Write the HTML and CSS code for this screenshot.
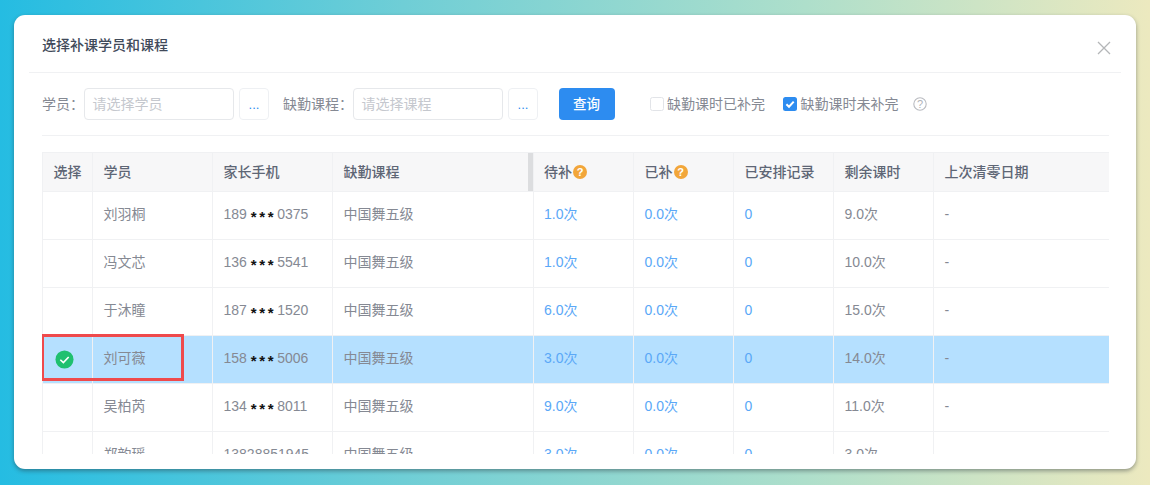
FILE: index.html
```html
<!DOCTYPE html>
<html lang="zh-CN">
<head>
<meta charset="utf-8">
<title>选择补课学员和课程</title>
<link rel="stylesheet" href="styles.css">
</head>
<body>
<main class="card">
  <header class="head">
    <h1 class="title">选择补课学员和课程</h1>
    <svg class="close" viewBox="0 0 14 14" width="14" height="14"><path d="M1 1 13 13M13 1 1 13" stroke="#b4b6b8" stroke-width="1.3" fill="none"/></svg>
  </header>
  <section class="filters">
    <label class="lbl lbl-a">学员：</label>
    <span class="input inp-a">请选择学员</span>
    <span class="dots">...</span>
    <label class="lbl lbl-b">缺勤课程：</label>
    <span class="input inp-b">请选择课程</span>
    <span class="dots">...</span>
    <span class="btn">查询</span>
    <span class="check check-a"><i class="box"></i>缺勤课时已补完</span>
    <span class="check check-b"><i class="box on"><svg viewBox="0 0 14 14" width="14" height="14"><path d="M3.4 7.2 6 9.7 10.7 4.6" stroke="#fff" stroke-width="2" fill="none"/></svg></i>缺勤课时未补完</span>
    <svg class="help" viewBox="0 0 14 14" width="14" height="14"><circle cx="7" cy="7" r="6.2" fill="none" stroke="#b9bbc0" stroke-width="1.1"/><text x="7" y="10.8" text-anchor="middle" class="help-q">?</text></svg>
  </section>
  <div class="tablewrap">
    <table class="grid">
      <colgroup><col class="c1"><col class="c2"><col class="c3"><col class="c4"><col class="c5"><col class="c6"><col class="c7"><col class="c8"><col class="c9"></colgroup>
      <thead>
        <tr>
          <th>选择</th><th>学员</th><th>家长手机</th><th class="grip-cell">缺勤课程<i class="grip"></i></th>
          <th>待补<i class="tip">?</i></th><th>已补<i class="tip">?</i></th><th>已安排记录</th><th>剩余课时</th><th>上次清零日期</th>
        </tr>
      </thead>
      <tbody>
        <tr><td></td><td>刘羽桐</td><td>189<b class="st">***</b>0375</td><td>中国舞五级</td><td class="lnk">1.0次</td><td class="lnk">0.0次</td><td class="lnk">0</td><td>9.0次</td><td>-</td></tr>
        <tr><td></td><td>冯文芯</td><td>136<b class="st">***</b>5541</td><td>中国舞五级</td><td class="lnk">1.0次</td><td class="lnk">0.0次</td><td class="lnk">0</td><td>10.0次</td><td>-</td></tr>
        <tr><td></td><td>于沐瞳</td><td>187<b class="st">***</b>1520</td><td>中国舞五级</td><td class="lnk">6.0次</td><td class="lnk">0.0次</td><td class="lnk">0</td><td>15.0次</td><td>-</td></tr>
        <tr class="sel"><td class="pick"><svg viewBox="0 0 20 20" width="19" height="19"><circle cx="10" cy="10" r="9.5" fill="#1fc06f"/><path d="M5.6 10.3 8.8 13.3 14.4 7.4" stroke="#fff" stroke-width="1.7" fill="none"/></svg></td><td>刘可薇</td><td>158<b class="st">***</b>5006</td><td>中国舞五级</td><td class="lnk">3.0次</td><td class="lnk">0.0次</td><td class="lnk">0</td><td>14.0次</td><td>-</td></tr>
        <tr><td></td><td>吴柏芮</td><td>134<b class="st">***</b>8011</td><td>中国舞五级</td><td class="lnk">9.0次</td><td class="lnk">0.0次</td><td class="lnk">0</td><td>11.0次</td><td>-</td></tr>
        <tr><td></td><td>郑韵瑶</td><td>13828851945</td><td>中国舞五级</td><td class="lnk">3.0次</td><td class="lnk">0.0次</td><td class="lnk">0</td><td>3.0次</td><td></td></tr>
      </tbody>
    </table>
    <div class="mark"></div>
  </div>
</main>
</body>
</html>
```
FILE: styles.css
```css
* { box-sizing: border-box; }
html, body { margin: 0; height: 100%; }
body {
  width: 1150px; height: 485px; overflow: hidden;
  padding: 14.5px 14px 16px;
  background: linear-gradient(90deg, #25bce2 0%, #6fced6 35%, #aedfcb 70%, #ece9bf 100%);
  font-family: "Liberation Sans", "Noto Sans CJK SC", sans-serif;
  font-size: 14px; color: #858993;
}
.card {
  width: 1122px; height: 454.5px; background: #fff; border-radius: 11px;
  box-shadow: 0 2px 4px rgba(40, 50, 60, .45);
  padding: 0 15px 0 15px; overflow: hidden;
}
.head {
  height: 58px; border-bottom: 1.5px solid #f0f1f3;
  display: flex; align-items: center; justify-content: space-between;
  padding: 3px 10px 0 13px;
}
.title { margin: 0; font-size: 14px; font-weight: 500; color: #414a5a; line-height: 20px; }
.close { display: block; margin-top: 6px; }
.filters {
  margin: 0 12px 0 13px; height: 63px; border-bottom: 1.5px solid #f0f1f3;
  display: flex; align-items: center; line-height: 20px;
}
.lbl { color: #858993; white-space: nowrap; }
.lbl-a { width: 42px; }
.lbl-b { width: 70px; margin-left: 14px; }
.input {
  width: 150px; height: 32px; border: 1.5px solid #e6e8eb; border-radius: 4px;
  color: #c5c8ce; padding-left: 7.5px; line-height: 30px;
}
.dots {
  width: 30px; height: 32px; border: 1.5px solid #eef0f3; border-radius: 4px;
  margin-left: 5px; color: #2d8cf0; font-size: 13px;
  text-align: center; line-height: 31px;
}
.btn {
  width: 56px; height: 32px; margin-left: 20.5px; background: #2d8cf0; border-radius: 4px;
  color: #fff; text-align: center; line-height: 33px; font-size: 13.5px; font-weight: 500;
}
.check { display: flex; align-items: center; white-space: nowrap; color: #858993; }
.check-a { margin-left: 35px; }
.check-b { margin-left: 18px; }
.box {
  width: 14px; height: 14px; border: 1.5px solid #e2e4e8; border-radius: 2.5px; margin-right: 3.5px;
  display: block;
}
.box.on { background: #2d8cf0; border: 0; }
.box svg { display: block; }
.help { margin-left: 14.5px; display: block; }
.help-q { font-size: 11px; fill: #b0b3b8; font-family: "Liberation Sans", sans-serif; }
.tablewrap {
  position: relative; margin: 16.5px 12px 0 13px; height: 301.5px; overflow: hidden;
}
.grid {
  table-layout: fixed; border-collapse: collapse; width: 1068px;
  border: 1.5px solid #eef0f2; border-bottom: 0;
}
.c1 { width: 50px; } .c2 { width: 120px; } .c3 { width: 120px; } .c4 { width: 200.5px; }
.c5 { width: 100.5px; } .c6 { width: 100px; } .c7 { width: 100px; } .c8 { width: 100px; } .c9 { width: auto; }
th, td {
  border: 1.5px solid #f0f1f3; padding: 0 10px 0 10.5px; text-align: left; white-space: nowrap;
  font-weight: 400; line-height: 20px;
}
th {
  height: 39px; background: #f7f7f8; color: #5e6675; font-weight: 500; padding-bottom: 1px;
}
td { height: 48px; color: #858993; padding-bottom: 3px; }
.lnk { color: #5ba8f7; }
.sel td { background: #b5e0ff; }
td.pick { padding: 0 0 0 12px; }
.pick svg { display: block; }
.st { color: #111; font-weight: 700; font-size: 15px; letter-spacing: 2.6px; margin: 0 1px 0 4px; vertical-align: -3px; line-height: 1; }
.grip-cell { position: relative; }
.grip { position: absolute; right: 0; top: 0; bottom: 0; width: 4.5px; background: #dcdddf; }
.tip {
  display: inline-block; width: 14px; height: 14px; border-radius: 50%; background: #f2a63a;
  color: #fff; font-style: normal; font-size: 11px; font-weight: 700; line-height: 14px;
  text-align: center; vertical-align: 1px; margin-left: 1px;
}
.mark {
  position: absolute; left: -1px; top: 182px; width: 143px; height: 47px;
  border: 3.5px solid #ef4a4c;
}
```
